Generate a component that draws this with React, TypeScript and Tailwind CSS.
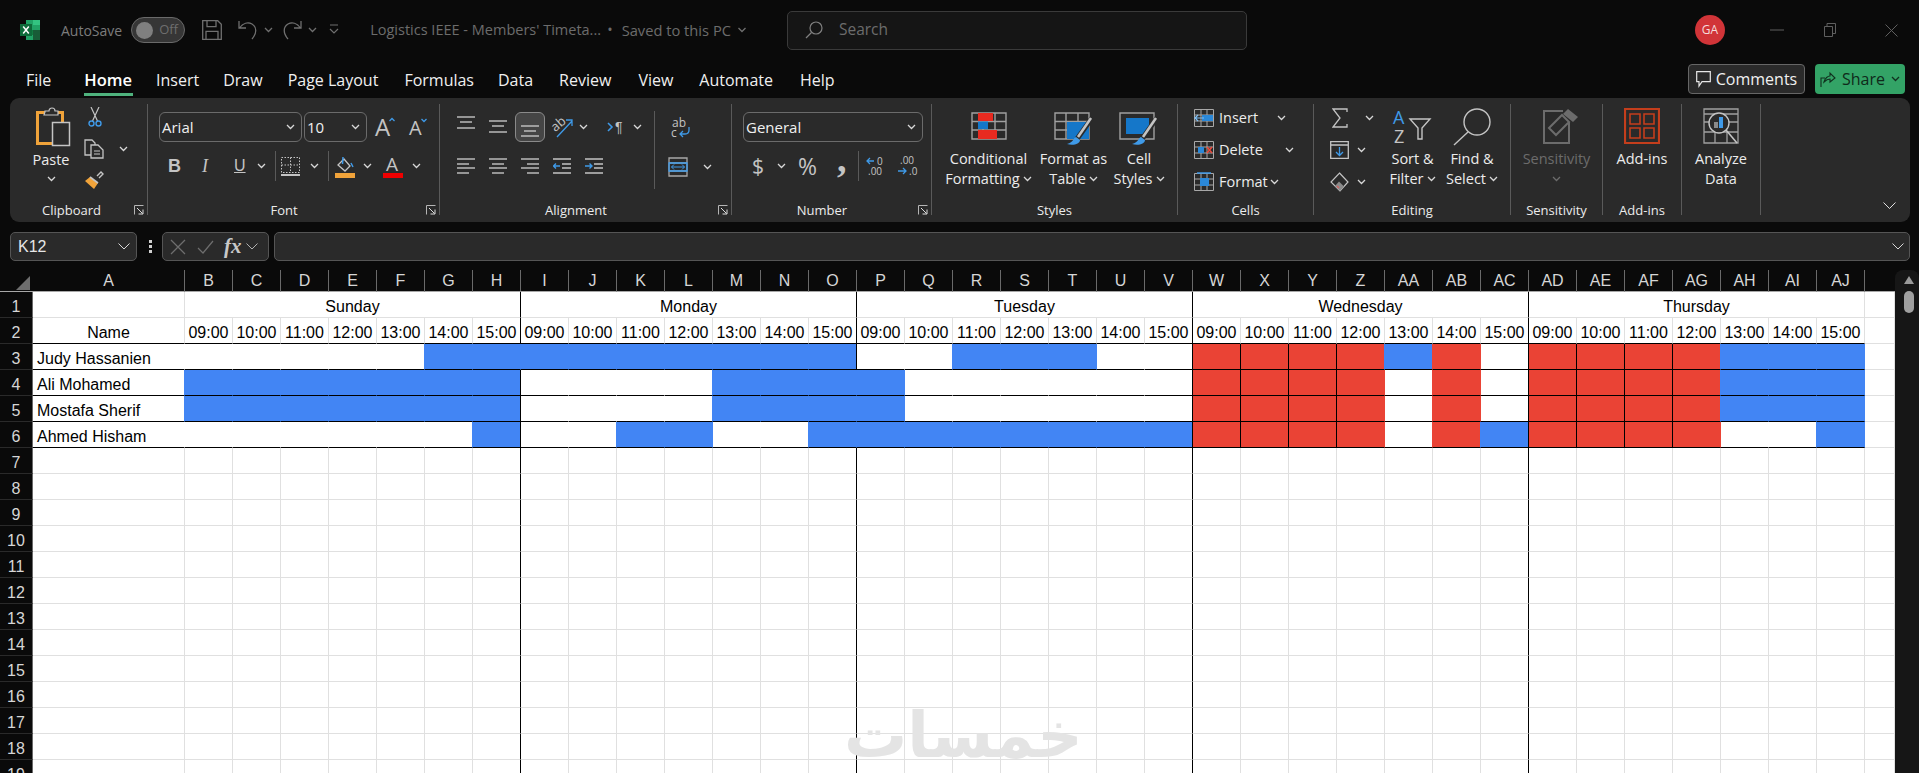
import type { ReactNode } from "react";

const gray = "#c4c4c4";
const blue = "#3f9ae8";
const orange = "#f0a33a";

const tabs = ["Insert", "Draw", "Page Layout", "Formulas", "Data", "Review", "View", "Automate", "Help"];
const tabGaps = ["ml-[24px]", "ml-[24px]", "ml-[25px]", "ml-[26px]", "ml-[24px]", "ml-[26px]", "ml-[27px]", "ml-[26px]", "ml-[27px]"];

const colNames = [
  "A", "B", "C", "D", "E", "F", "G", "H", "I", "J", "K", "L", "M", "N", "O", "P", "Q", "R", "S", "T",
  "U", "V", "W", "X", "Y", "Z", "AA", "AB", "AC", "AD", "AE", "AF", "AG", "AH", "AI", "AJ",
];
const days = ["Sunday", "Monday", "Tuesday", "Wednesday", "Thursday"];
const times = ["09:00", "10:00", "11:00", "12:00", "13:00", "14:00", "15:00"];
const people = [
  { name: "Judy Hassanien", first: "w", slots: "wwwwwbbbbbbbbbwwbbbwwrrrrbrwrrrrbbb" },
  { name: "Ali Mohamed", first: "b", slots: "bbbbbbbwwwwbbbbwwwwwwrrrrwrwrrrrbbb" },
  { name: "Mostafa Sherif", first: "b", slots: "bbbbbbbwwwwbbbbwwwwwwrrrrwrwrrrrbbb" },
  { name: "Ahmed Hisham", first: "w", slots: "wwwwwwbwwbbwwbbbbbbbbrrrrwrbrrrrwwb" },
];

const fillBg: Record<string, string> = { w: "bg-white", b: "bg-[#4285f4]", r: "bg-[#ea4335]" };
const rightLine: Record<string, string> = {
  k: "border-r-black",
  g: "border-r-[#e0e0e0]",
  w: "border-r-white",
  b: "border-r-[#4285f4]",
  r: "border-r-[#ea4335]",
};

function isDayEnd(i: number) {
  return i === 6 || i === 13 || i === 20 || i === 27;
}

function Chev({ color = "#d8d8d8", className = "" }: { color?: string; className?: string }) {
  return (
    <svg width="9" height="6" viewBox="0 0 9 6" fill="none" className={`shrink-0 ${className}`}>
      <path d="M1 1l3.5 3.5L8 1" stroke={color} strokeWidth="1.3" />
    </svg>
  );
}

function Launcher() {
  return (
    <svg width="10" height="10" viewBox="0 0 10 10" fill="none" className="shrink-0">
      <path d="M.5 9.5V.5h9" stroke="#b5b5b5" />
      <path d="M3 3l5.5 5.5M9 4.5V9H4.5" stroke="#dcdcdc" />
    </svg>
  );
}

function Group({ w, label, launcher, children, labelPad = "" }: { w: string; label?: string; launcher?: boolean; children: ReactNode; labelPad?: string }) {
  return (
    <div className={`flex h-[111px] shrink-0 flex-col border-r border-[#5a5a5a] ${w}`}>
      <div className="flex h-[99px] shrink-0 items-start">{children}</div>
      <div className={`flex h-[14px] shrink-0 items-center text-[13px] leading-[14px] text-[#ececec] ${labelPad}`}>
        <span className="flex-1 text-center">{label}</span>
        {launcher && (
          <span className="ml-[6px] mr-[3px]">
            <Launcher />
          </span>
        )}
      </div>
    </div>
  );
}

function Select({ w, text }: { w: string; text: string }) {
  return (
    <div className={`flex h-[30px] items-center justify-between rounded-[6px] border border-[#6b6b6b] pl-[2px] pr-[6px] text-[15px] leading-[20px] text-[#f0f0f0] ${w}`}>
      <span>{text}</span>
      <Chev />
    </div>
  );
}

function LargeBtn({ w, top, icon, lines, chev, dim }: { w: string; top: string; icon: ReactNode; lines: string[]; chev?: boolean; dim?: boolean }) {
  return (
    <div className={`flex flex-col items-center text-[14.5px] leading-[20px] ${dim ? "text-[#6c6c6c]" : "text-[#ececec]"} ${w}`}>
      <div className={`flex h-[45px] justify-center ${top}`}>{icon}</div>
      <span>{lines[0]}</span>
      <span className="flex h-[20px] items-center">
        {lines[1]}
        {chev && <Chev className={lines[1] ? "ml-[3px]" : ""} color={dim ? "#6c6c6c" : "#d8d8d8"} />}
      </span>
    </div>
  );
}

function Bars({ h = 26, lines }: { h?: number; lines: number[][] }) {
  return (
    <svg width="18" height={h} viewBox={`0 0 18 ${h}`} className="shrink-0">
      {lines.map((l) => (
        <path key={l.join()} d={`M${l[0]} ${l[2]}H${l[1]}`} stroke={gray} strokeWidth="1.4" />
      ))}
    </svg>
  );
}

function IndentIcon({ flip }: { flip?: boolean }) {
  return (
    <svg width="18" height="18" viewBox="0 0 18 18" fill="none" className="shrink-0">
      <path d="M0 2h18M0 16h18M9 7h9M9 11h9" stroke={gray} strokeWidth="1.4" />
      {flip ? (
        <path d="M0 9h7M4.5 6.5L7 9l-2.5 2.5" stroke={blue} strokeWidth="1.4" />
      ) : (
        <path d="M7 9H.5M3 6.5L.5 9 3 11.5" stroke={blue} strokeWidth="1.4" />
      )}
    </svg>
  );
}

function SmallGrid({ children }: { children?: ReactNode }) {
  return (
    <svg width="20" height="20" viewBox="0 0 20 20" fill="none" className="shrink-0">
      <path d="M.5 1.5h19v17H.5zM.5 7h19M.5 13h19M7 1.5v17M13 1.5v17" stroke="#a8a8a8" />
      {children}
    </svg>
  );
}

function Brush() {
  return (
    <>
      <path d="M38 6L23 27" stroke="#2a2a2a" strokeWidth="5" />
      <path d="M37 6L24 25" stroke={gray} strokeWidth="2.6" />
      <path d="M22 25c-3 1-2 5-9 7 6 2 13 0 13-4z" fill={blue} />
    </>
  );
}

function TableGrid() {
  return <path d="M1 1h34v26H1zM12 1v26M24 1v26M1 9.5h34M1 18h34" stroke="#a0a0a0" strokeWidth="1.4" />;
}

function Cut() {
  return (
    <svg width="14" height="20" viewBox="0 0 14 20" fill="none">
      <path d="M3 0l6.5 14M11 0L4.5 14" stroke={gray} strokeWidth="1.2" />
      <circle cx="3.5" cy="16.5" r="2.5" stroke={blue} strokeWidth="1.4" />
      <circle cx="10.5" cy="16.5" r="2.5" stroke={blue} strokeWidth="1.4" />
    </svg>
  );
}

function Copy() {
  return (
    <svg width="20" height="20" viewBox="0 0 20 20" fill="none">
      <path d="M1 1h7l3 3v12H1z" stroke={gray} strokeWidth="1.3" />
      <path d="M7 6h7l5 5v8H7z" fill="#2a2a2a" stroke={gray} strokeWidth="1.3" />
      <path d="M10 12h6M10 15h6" stroke={gray} />
    </svg>
  );
}

function Painter() {
  return (
    <svg width="20" height="19" viewBox="0 0 20 19" fill="none">
      <path d="M13 5l4-4 2 2-4 4" stroke={gray} strokeWidth="1.4" />
      <path d="M6 6l8 6-4 6L1 10z" fill={orange} />
      <path d="M6 6l8 6" stroke={gray} strokeWidth="1.6" />
    </svg>
  );
}

export default function App() {
  return (
    <div className="flex h-[773px] w-[1919px] flex-col overflow-hidden bg-[#0a0a0a] font-['Open_Sans',sans-serif]">
      {/* title bar */}
      <header className="flex h-[60px] shrink-0 items-center pl-[20px]">
        <svg width="20" height="20" viewBox="0 0 20 20" className="shrink-0">
          <path d="M6 0h14v20H6z" fill="#21a366" />
          <path d="M13 0h7v5h-7z" fill="#33c481" />
          <path d="M6 10h7v5H6z" fill="#107c41" />
          <path d="M13 10h7v10h-7z" fill="#185c37" />
          <path d="M0 4h12v12H0z" fill="#0e6b3a" />
          <path d="M3.2 6.5L8.8 13.5M8.8 6.5L3.2 13.5" stroke="#fff" strokeWidth="1.5" />
        </svg>
        <span className="ml-[21px] text-[14px] text-[#7c7c7c]">AutoSave</span>
        <div className="ml-[9px] flex h-[26px] w-[54px] items-center rounded-full border border-[#6a6a6a] bg-[#363636] pl-[4px]">
          <span className="h-[17px] w-[17px] rounded-full bg-[#7f7f7f]" />
          <span className="ml-[6px] text-[13px] text-[#6e6e6e]">Off</span>
        </div>
        <svg width="20" height="20" viewBox="0 0 20 20" fill="none" className="ml-[17px]">
          <path d="M.7.7h15l3.6 3.6v15H.7zM5 .7v6h9v-6M4 19.3v-8h12v8" stroke="#707070" strokeWidth="1.3" />
        </svg>
        <svg width="20" height="20" viewBox="0 0 20 20" fill="none" className="ml-[16px]">
          <path d="M1 1v7h7M1.5 8C5 3 10 2 14 4c5 3 5 9 0 15" stroke="#707070" strokeWidth="1.3" />
        </svg>
        <Chev color="#6f6f6f" className="ml-[6px]" />
        <svg width="20" height="20" viewBox="0 0 20 20" fill="none" className="ml-[9px]">
          <path d="M19 1v7h-7M18.5 8C15 3 10 2 6 4c-5 3-5 9 0 15" stroke="#707070" strokeWidth="1.3" />
        </svg>
        <Chev color="#6f6f6f" className="ml-[6px]" />
        <svg width="10" height="12" viewBox="0 0 10 12" fill="none" className="ml-[12px]">
          <path d="M1 1h8M1 5l4 4 4-4" stroke="#6f6f6f" strokeWidth="1.2" />
        </svg>
        <span className="ml-[31px] w-[229px] text-[14.5px] whitespace-nowrap text-[#6c6c6c]">Logistics IEEE - Members' Timeta...</span>
        <span className="ml-[8px] text-[14.5px] text-[#6c6c6c]">•</span>
        <span className="ml-[9px] text-[14.7px] whitespace-nowrap text-[#6c6c6c]">Saved to this PC</span>
        <Chev color="#6f6f6f" className="ml-[5px] w-[12px]" />
        <div className="ml-[39px] flex h-[39px] w-[460px] items-center rounded-[5px] border border-[#3a3a3a] bg-[#151515] pl-[17px] text-[15.5px] text-[#6c6c6c]">
          <svg width="18" height="18" viewBox="0 0 18 18" fill="none">
            <circle cx="11" cy="7" r="6" stroke="#808080" strokeWidth="1.2" />
            <path d="M6.5 11.5L1 17" stroke="#808080" strokeWidth="1.2" />
          </svg>
          <span className="ml-[16px]">Search</span>
        </div>
        <div className="ml-[448px] flex h-[30px] w-[30px] items-center justify-center rounded-full bg-[#d13438] text-[12px] text-[#f5dcdc]">GA</div>
        <svg width="14" height="2" viewBox="0 0 14 2" className="ml-[45px]">
          <path d="M0 1h14" stroke="#5f5f5f" />
        </svg>
        <svg width="12" height="14" viewBox="0 0 12 14" fill="none" className="ml-[40px]">
          <path d="M.5 3.5h8v10h-8zM3 3V.5h8.500v10H9" stroke="#5f5f5f" />
        </svg>
        <svg width="13" height="13" viewBox="0 0 13 13" fill="none" className="ml-[49px]">
          <path d="M.5.5l12 12M12.500.5l-12 12" stroke="#5f5f5f" />
        </svg>
      </header>

      {/* tabs */}
      <nav className="flex h-[38px] shrink-0 items-start pl-[26px] pt-[8px] text-[16px] leading-[24px] text-[#f0f0f0]">
        <span>File</span>
        <span className="relative ml-[33px] text-[16.5px] font-semibold text-white">
          Home
          <span className="absolute -bottom-[4px] left-0 h-[3px] w-[49px] bg-[#4fb27d]" />
        </span>
        {tabs.map((tab, i) => (
          <span key={tab} className={tabGaps[i]}>
            {tab}
          </span>
        ))}
        <div className="ml-auto mr-[14px] -mt-[4px] flex gap-[10px]">
          <div className="flex h-[30px] w-[117px] items-center justify-center gap-[5px] rounded-[4px] border border-[#666] bg-[#2a2a2a] text-[16px]">
            <svg width="15" height="17" viewBox="0 0 15 17" fill="none">
              <path d="M.7.7h13.600v10H6L3 15v-4.300H.7z" stroke="#e6e6e6" strokeWidth="1.2" />
            </svg>
            Comments
          </div>
          <div className="flex h-[30px] w-[90px] items-center justify-center gap-[6px] rounded-[4px] bg-[#33a366] text-[16px] text-[#0f2a1a]">
            <svg width="16" height="17" viewBox="0 0 16 17" fill="none">
              <path d="M1 16V7h4M4 11c1-4 4-6 6-6V2l5 5-5 4V8c-2 0-4 1-6 3z" stroke="#10301e" strokeWidth="1.1" />
            </svg>
            Share
            <Chev color="#10301e" />
          </div>
        </div>
      </nav>

      {/* ribbon */}
      <section className="mx-[10px] flex h-[124px] w-[1900px] shrink-0 rounded-[9px] bg-[#2a2a2a] pt-[6px]">
        <Group w="w-[138px]" label="Clipboard" launcher labelPad="pl-[5px]">
          <div className="ml-[19px] flex w-[44px] flex-col items-center pt-[3px]">
            <svg width="36" height="40" viewBox="0 0 36 40" fill="none" className="ml-[6px]">
              <path d="M1.500 5.500h25v31h-25z" stroke={orange} strokeWidth="3" />
              <path d="M9 5V4h4c0-4 6-4 6 0h3v4H8z" fill="#2a2a2a" stroke={gray} strokeWidth="1.200" />
              <path d="M16.500 15.500h17v23h-17z" fill="#2a2a2a" stroke={gray} strokeWidth="1.500" />
            </svg>
            <span className="mt-[3px] text-[14.5px] leading-[20px] text-[#ececec]">Paste</span>
            <Chev className="mt-[6px]" />
          </div>
          <div className="ml-[11px] flex flex-col gap-[12px] pt-[3px]">
            <div className="ml-[4px] h-[20px]">
              <Cut />
            </div>
            <div className="flex h-[20px] items-center">
              <Copy />
              <Chev className="ml-[15px]" />
            </div>
            <div className="h-[20px]">
              <Painter />
            </div>
          </div>
        </Group>

        <Group w="w-[292px]" label="Font" launcher>
          <div className="flex flex-col pl-[11px] pt-[8px]">
            <div className="flex items-center">
              <Select w="w-[143px]" text="Arial" />
              <div className="ml-[2px]">
                <Select w="w-[63px]" text="10" />
              </div>
              <svg width="20" height="20" viewBox="0 0 20 20" className="ml-[8px] overflow-visible">
                <text x="0" y="19" fontSize="24" fill={gray}>A</text>
                <path d="M14.500 4l2.500-2.500L19.500 4" fill="none" stroke={blue} strokeWidth="1.300" />
              </svg>
              <svg width="18" height="18" viewBox="0 0 18 18" className="ml-[14px] overflow-visible">
                <text x="0" y="17" fontSize="20" fill={gray}>A</text>
                <path d="M12.500 1l2.500 2.500L17.500 1" fill="none" stroke={blue} strokeWidth="1.300" />
              </svg>
            </div>
            <div className="mt-[12px] flex h-[24px] items-center leading-none text-[#c4c4c4]">
              <span className="ml-[9px] w-[14px] font-['Liberation_Sans',sans-serif] text-[18px] font-bold">B</span>
              <span className="ml-[20px] w-[10px] font-['Liberation_Serif',serif] text-[18px] italic">I</span>
              <span className="ml-[22px] w-[12px] font-['Liberation_Sans',sans-serif] text-[16px] underline">U</span>
              <Chev className="ml-[11px]" />
              <span className="ml-[9px] h-[30px] w-px bg-[#5a5a5a]" />
              <svg width="19" height="19" viewBox="0 0 19 19" fill="none" className="ml-[5px]">
                <path d="M.5.5h18v15H.5zM9.500.5v15M.5 8h18" stroke={gray} strokeDasharray="1.500 1.500" />
                <path d="M0 18h19" stroke={gray} strokeWidth="2" />
              </svg>
              <Chev className="ml-[10px]" />
              <span className="ml-[9px] h-[30px] w-px bg-[#5a5a5a]" />
              <svg width="20" height="22" viewBox="0 0 20 22" fill="none" className="ml-[6px] mt-[2px]">
                <path d="M3 9l6-6 6 7-5 5z" stroke={gray} strokeWidth="1.300" />
                <path d="M8 1l-.5 7M16 7l2 4" stroke={blue} strokeWidth="1.500" />
                <path d="M0 17h20v5H0z" fill={orange} />
              </svg>
              <Chev className="ml-[8px]" />
              <svg width="20" height="22" viewBox="0 0 20 22" className="ml-[11px] mt-[2px] overflow-visible">
                <text x="3" y="15" fontSize="19" fill={gray}>A</text>
                <path d="M0 17h20v5H0z" fill="#f00000" />
              </svg>
              <Chev className="ml-[9px]" />
            </div>
          </div>
        </Group>

        <Group w="w-[292px]" label="Alignment" launcher>
          <div className="mt-[7px] flex h-[78px] w-[215px] flex-col border-r border-[#5a5a5a] pl-[17px]">
            <div className="flex h-[32px] items-center">
              <Bars lines={[[0, 18, 3], [3, 15, 8], [0, 18, 14]]} />
              <span className="ml-[14px]">
                <Bars lines={[[0, 18, 7], [3, 15, 12], [0, 18, 18]]} />
              </span>
              <div className="ml-[8px] flex h-[30px] w-[30px] items-center justify-center rounded-[6px] border border-[#8a8a8a] bg-[#454545]">
                <Bars lines={[[0, 18, 12], [3, 15, 17], [0, 18, 22]]} />
              </div>
              <svg width="21" height="22" viewBox="0 0 21 22" className="ml-[7px] overflow-visible">
                <text x="0" y="13" fontSize="13" fill={gray} transform="rotate(-40 6 10)">ab</text>
                <path d="M5 21L20 5M14 4h6v6" fill="none" stroke={blue} strokeWidth="1.300" />
              </svg>
              <Chev className="ml-[6px]" />
              <span className="ml-[19px] flex w-[19px] items-center">
                <svg width="7" height="10" viewBox="0 0 7 10" fill="none">
                  <path d="M1 1l4 4-4 4" stroke={blue} strokeWidth="1.600" />
                </svg>
                <span className="ml-[1px] font-['Liberation_Sans',sans-serif] text-[14px] leading-[14px] text-[#c4c4c4]">¶</span>
              </span>
              <Chev className="ml-[7px]" />
            </div>
            <div className="mt-[11px] flex h-[24px] items-center gap-[14px]">
              <Bars h={18} lines={[[0, 18, 2], [0, 12, 7], [0, 18, 11], [0, 12, 16]]} />
              <Bars h={18} lines={[[0, 18, 2], [3, 15, 7], [0, 18, 11], [3, 15, 16]]} />
              <Bars h={18} lines={[[0, 18, 2], [6, 18, 7], [0, 18, 11], [6, 18, 16]]} />
              <IndentIcon />
              <IndentIcon flip />
            </div>
          </div>
          <div className="flex flex-col pl-[16px] pt-[14px]">
            <svg width="19" height="20" viewBox="0 0 19 20" className="overflow-visible">
              <text x="1" y="9" fontSize="12" fill={gray}>ab</text>
              <text x="0" y="19" fontSize="12" fill={gray}>c</text>
              <path d="M18 9v3c0 3-2 4-4 4H9M12 13l-3 3 3 3" fill="none" stroke={blue} strokeWidth="1.300" />
            </svg>
            <div className="-ml-[3px] mt-[19px] flex items-center">
              <svg width="20" height="20" viewBox="0 0 20 20" fill="none">
                <path d="M1 1h18v18H1zM1 6h18M1 14h18" stroke="#a8a8a8" strokeWidth="1.300" />
                <path d="M1 6h18v8H1z" stroke={blue} strokeWidth="1.300" />
                <path d="M3.500 10h13M6 7.500L3.500 10 6 12.500M14 7.500l2.500 2.500-2.500 2.500" stroke={blue} />
              </svg>
              <Chev className="ml-[15px]" />
            </div>
          </div>
        </Group>

        <Group w="w-[200px]" label="Number" launcher>
          <div className="flex flex-col pl-[11px] pt-[8px]">
            <Select w="w-[180px]" text="General" />
            <div className="mt-[12px] flex h-[24px] items-center text-[#c4c4c4]">
              <span className="ml-[9px] w-[13px] text-[21px] leading-[24px]">$</span>
              <Chev className="ml-[12px]" />
              <span className="ml-[12px] w-[24px] text-[23px] leading-[24px]">%</span>
              <span className="ml-[15px] w-[12px] -translate-y-[7px] font-['Liberation_Serif',serif] text-[38px] font-bold leading-[24px]">,</span>
              <span className="ml-[9px] h-[30px] w-px bg-[#5a5a5a]" />
              <svg width="20" height="22" viewBox="0 0 20 22" className="ml-[7px] overflow-visible">
                <path d="M8 6H1M4 3L1 6l3 3" fill="none" stroke={blue} strokeWidth="1.300" />
                <text x="11" y="10" fontSize="10" fill={gray}>0</text>
                <text x="2" y="20" fontSize="10" fill={gray}>.00</text>
              </svg>
              <svg width="20" height="22" viewBox="0 0 20 22" className="ml-[12px] overflow-visible">
                <text x="2" y="9" fontSize="10" fill={gray}>.00</text>
                <path d="M0 16h8M5 13l3 3-3 3" fill="none" stroke={blue} strokeWidth="1.300" />
                <text x="11" y="20" fontSize="10" fill={gray}>.0</text>
              </svg>
            </div>
          </div>
        </Group>

        <Group w="w-[246px]" label="Styles">
          <div className="flex pl-[9px]">
            <LargeBtn
              w="w-[95px]"
              top="pt-[8px]"
              chev
              lines={["Conditional", "Formatting"]}
              icon={
                <svg width="36" height="28" viewBox="0 0 36 28" fill="none">
                  <TableGrid />
                  <path d="M7 1h15v8H7zM7 18h19v9H7z" fill="#e82a20" />
                  <path d="M7 9.500h10V17H7z" fill="#1577c9" />
                </svg>
              }
            />
            <LargeBtn
              w="w-[75px]"
              top="pt-[8px]"
              chev
              lines={["Format as", "Table"]}
              icon={
                <svg width="40" height="34" viewBox="0 0 40 34" fill="none">
                  <TableGrid />
                  <path d="M13 10h22v17H13z" fill="#1577c9" />
                  <Brush />
                </svg>
              }
            />
            <LargeBtn
              w="w-[56px]"
              top="pt-[8px]"
              chev
              lines={["Cell", "Styles"]}
              icon={
                <svg width="40" height="34" viewBox="0 0 40 34" fill="none">
                  <path d="M1 1h34v26H1z" stroke="#a0a0a0" strokeWidth="1.400" />
                  <path d="M7 6h23v16H7z" fill="#1577c9" />
                  <Brush />
                </svg>
              }
            />
          </div>
        </Group>

        <Group w="w-[136px]" label="Cells">
          <div className="flex flex-col gap-[4px] pl-[16px] text-[14.5px] text-[#ececec]">
            <div className="flex h-[28px] items-center">
              <SmallGrid>
                <path d="M8 7h11v6H8z" fill="#2b88d8" />
                <path d="M10 10H1M4 7l-3 3 3 3" stroke="#7fc0f5" strokeWidth="1.200" />
              </SmallGrid>
              <span className="ml-[5px] w-[58px]">Insert</span>
              <Chev />
            </div>
            <div className="flex h-[28px] items-center">
              <SmallGrid>
                <path d="M4 7h6v6H4z" fill="#2b88d8" />
                <path d="M13 7l5 6M18 7l-5 6" stroke="#ef4a3c" strokeWidth="1.500" />
              </SmallGrid>
              <span className="ml-[5px] w-[66px]">Delete</span>
              <Chev />
            </div>
            <div className="flex h-[28px] items-center">
              <SmallGrid>
                <path d="M6 6h9v8H6z" fill="#2b88d8" />
                <path d="M3 1h14" stroke={blue} strokeWidth="1.500" />
              </SmallGrid>
              <span className="ml-[5px] w-[51px]">Format</span>
              <Chev />
            </div>
          </div>
        </Group>

        <Group w="w-[197px]" label="Editing">
          <div className="flex">
            <div className="flex w-[66px] flex-col gap-[4px] pl-[16px]">
              <div className="flex h-[28px] items-center">
                <svg width="16" height="20" viewBox="0 0 16 20" fill="none" className="ml-[2px]">
                  <path d="M15 4V1H1l7 9-7 9h14v-3" stroke={gray} strokeWidth="1.300" />
                </svg>
                <Chev className="ml-[17px]" />
              </div>
              <div className="flex h-[28px] items-center">
                <svg width="19" height="18" viewBox="0 0 19 18" fill="none">
                  <path d="M.7.7h17.600v16.600H.7zM.7 4h17.600" stroke={gray} strokeWidth="1.300" />
                  <path d="M9.500 6v8M6 11l3.500 3.500L13 11" stroke={blue} strokeWidth="1.300" />
                </svg>
                <Chev className="ml-[8px]" />
              </div>
              <div className="flex h-[28px] items-center">
                <svg width="19" height="20" viewBox="0 0 19 20" fill="none">
                  <path d="M9.500 1L18 10l-8 9-9-9z" stroke={gray} strokeWidth="1.200" />
                  <path d="M5 14l5 5 4-4.500-5-5z" fill="#8a8a8a" />
                  <path d="M7 14l2 2" stroke="#d06060" strokeWidth="1.500" />
                </svg>
                <Chev className="ml-[8px]" />
              </div>
            </div>
            <LargeBtn
              w="w-[65px]"
              top="pt-[4px]"
              chev
              lines={["Sort &", "Filter"]}
              icon={
                <svg width="40" height="38" viewBox="0 0 40 38" fill="none" className="overflow-visible">
                  <text x="0" y="16" fontSize="18" fill={blue}>A</text>
                  <text x="1" y="35" fontSize="18" fill={gray}>Z</text>
                  <path d="M17 11h20l-8 9v11h-4V20z" stroke={gray} strokeWidth="1.400" />
                </svg>
              }
            />
            <LargeBtn
              w="w-[54px]"
              top="pt-[4px]"
              chev
              lines={["Find &", "Select"]}
              icon={
                <svg width="38" height="38" viewBox="0 0 38 38" fill="none">
                  <circle cx="24" cy="14" r="13" stroke={gray} strokeWidth="1.400" />
                  <path d="M15 24L1 37" stroke={gray} strokeWidth="1.400" />
                </svg>
              }
            />
          </div>
        </Group>

        <Group w="w-[92px]" label="Sensitivity">
          <LargeBtn
            w="w-full"
            top="pt-[4px]"
            dim
            chev
            lines={["Sensitivity", ""]}
            icon={
              <svg width="36" height="36" viewBox="0 0 36 36" fill="none" className="ml-[8px]">
                <path d="M20 3H1v32h25V14" stroke="#6c6c6c" strokeWidth="2" />
                <path d="M6 20l13-13 7 7-13 13z" stroke="#6c6c6c" strokeWidth="2" />
                <path d="M20 6l5-5 10 8-5 5z" fill="#6c6c6c" />
              </svg>
            }
          />
        </Group>

        <Group w="w-[79px]" label="Add-ins">
          <LargeBtn
            w="w-full"
            top="pt-[4px]"
            lines={["Add-ins", ""]}
            icon={
              <svg width="36" height="36" viewBox="0 0 36 36" fill="none">
                <path d="M1 1h34v34H1z" stroke="#c43e1c" strokeWidth="2.200" />
                <path d="M6 6h10v10H6zM20 6h10v10H20zM6 20h10v10H6zM20 20h10v10H20z" stroke="#c43e1c" strokeWidth="1.600" />
              </svg>
            }
          />
        </Group>

        <Group w="w-[79px]">
          <LargeBtn
            w="w-full"
            top="pt-[4px]"
            lines={["Analyze", "Data"]}
            icon={
              <svg width="36" height="36" viewBox="0 0 36 36" fill="none">
                <path d="M1 1h34v34H1zM1 6h34M1 14h34M1 24h34M12 24v11M24 24v11" stroke="#a0a0a0" strokeWidth="1.300" />
                <circle cx="16" cy="15" r="10" fill="#2a2a2a" stroke={gray} strokeWidth="1.400" />
                <path d="M11 14h4v6h-4z" fill="#8a8a8a" />
                <path d="M16 9h4v11h-4z" fill={blue} />
                <path d="M23 22l11 13" stroke={gray} strokeWidth="1.600" />
              </svg>
            }
          />
        </Group>

        <div className="flex h-[111px] flex-1 items-end justify-end pb-[6px] pr-[14px]">
          <svg width="13" height="7" viewBox="0 0 13 7" fill="none">
            <path d="M.5.5l6 6 6-6" stroke="#e0e0e0" />
          </svg>
        </div>
      </section>

      {/* formula bar */}
      <div className="mt-[10px] flex h-[29px] shrink-0 items-stretch pl-[10px] font-['Liberation_Sans',sans-serif]">
        <div className="flex w-[127px] items-center justify-between rounded-[5px] border border-[#555] bg-[#2a2a2a] pl-[7px] pr-[6px] text-[16px] text-[#e6e6e6]">
          K12
          <svg width="12" height="7" viewBox="0 0 12 7" fill="none">
            <path d="M.5.5L6 6 11.500.5" stroke="#d8d8d8" />
          </svg>
        </div>
        <div className="ml-[11px] flex w-[4px] flex-col items-center justify-center gap-[2px]">
          <span className="h-[3px] w-[3px] bg-[#d0d0d0]" />
          <span className="h-[3px] w-[3px] bg-[#d0d0d0]" />
          <span className="h-[3px] w-[3px] bg-[#d0d0d0]" />
        </div>
        <div className="ml-[10px] flex w-[107px] items-center rounded-[5px] border border-[#555] bg-[#2a2a2a] pl-[7px]">
          <svg width="16" height="16" viewBox="0 0 16 16" fill="none">
            <path d="M1 1l14 14M15 1L1 15" stroke="#6e6e6e" strokeWidth="1.300" />
          </svg>
          <svg width="17" height="14" viewBox="0 0 17 14" fill="none" className="ml-[11px]">
            <path d="M1 8l5 5L16 1" stroke="#6e6e6e" strokeWidth="1.200" />
          </svg>
          <span className="ml-[10px] font-['Liberation_Serif',serif] text-[21px] font-bold italic leading-none text-[#c8c8c8]">fx</span>
          <svg width="12" height="7" viewBox="0 0 12 7" fill="none" className="ml-[4px]">
            <path d="M.5.5L6 6 11.500.5" stroke="#b0b0b0" />
          </svg>
        </div>
        <div className="ml-[5px] flex w-[1636px] items-center justify-end rounded-[5px] border border-[#555] bg-[#2a2a2a] pr-[5px]">
          <svg width="12" height="7" viewBox="0 0 12 7" fill="none">
            <path d="M.5.5L6 6 11.500.5" stroke="#d8d8d8" />
          </svg>
        </div>
      </div>

      {/* sheet */}
      <div className="mt-[9px] flex min-h-0 flex-1 font-['Liberation_Sans',sans-serif] text-[16px]">
        <div className="relative w-[1895px] shrink-0 overflow-hidden">
          <div className="grid grid-cols-[33px_152px_repeat(35,48px)_30px] grid-rows-[22px] auto-rows-[26px]">
            <div className="flex items-end justify-end border-b border-[#a8a8a8] pb-[1px] pr-[3px]">
              <svg width="14" height="14" viewBox="0 0 14 14">
                <path d="M14 0v14H0z" fill="#6e6e6e" />
              </svg>
            </div>
            {colNames.map((name) => (
              <div key={name} className="flex items-center justify-center border-b border-r border-b-[#a8a8a8] border-r-[#6a6a6a] text-[#d6d6d6]">
                {name}
              </div>
            ))}
            <div className="border-b border-[#a8a8a8]" />

            {/* row 1 */}
            <RowHead n={1} />
            <div className="border-b border-r border-[#e0e0e0] bg-white" />
            {days.map((day, i) => (
              <div
                key={day}
                className={`col-span-7 flex items-end justify-center border-b border-r border-b-[#e0e0e0] bg-white leading-[20px] text-black ${i < 4 ? "border-r-black" : "border-r-[#e0e0e0]"}`}
              >
                {day}
              </div>
            ))}
            <div className="border-b border-r border-[#e0e0e0] bg-white" />

            {/* row 2 */}
            <RowHead n={2} />
            <div className="flex items-end justify-center border-b border-r border-b-black border-r-[#e0e0e0] bg-white leading-[20px] text-black">Name</div>
            {days.map((day) =>
              times.map((t, i) => (
                <div
                  key={day + t}
                  className={`flex items-end justify-center border-b border-r border-b-black bg-white leading-[20px] text-black ${i === 6 && day !== "Thursday" ? "border-r-black" : "border-r-[#e0e0e0]"}`}
                >
                  {t}
                </div>
              )),
            )}
            <div className="border-b border-r border-[#e0e0e0] bg-white" />

            {/* people */}
            {people.map((p, r) => (
              <PersonRow key={p.name} n={r + 3} name={p.name} first={p.first} slots={p.slots} />
            ))}

            {/* empty rows */}
            {Array.from({ length: 13 }, (_, r) => (
              <EmptyRow key={r} n={r + 7} />
            ))}
          </div>

          <div dir="rtl" className="pointer-events-none absolute left-[844px] top-[431px] font-['DejaVu_Sans',sans-serif] text-[63px] font-bold leading-[70px] text-[#e4e4e4]">
            خمسات
          </div>
        </div>

        {/* scrollbar */}
        <div className="flex w-[24px] flex-col items-center rounded-t-[8px] bg-[#161616] pl-[3px] pt-[6px]">
          <svg width="10" height="8" viewBox="0 0 10 8">
            <path d="M5 0l5 8H0z" fill="#9a9a9a" />
          </svg>
          <span className="mt-[7px] h-[22px] w-[10px] rounded-full bg-[#a0a0a0]" />
        </div>
      </div>
    </div>
  );
}

function RowHead({ n }: { n: number }) {
  return <div className="flex items-end justify-center border-b border-r border-b-[#2a2a2a] border-r-[#6a6a6a] leading-[20px] text-[#d6d6d6]">{n}</div>;
}

function PersonRow({ n, name, first, slots }: { n: number; name: string; first: string; slots: string }) {
  const cells = slots.split("");
  return (
    <>
      <RowHead n={n} />
      <div className={`flex items-end border-b border-r border-b-black bg-white pl-[4px] leading-[20px] whitespace-nowrap text-black ${rightLine[first]}`}>{name}</div>
      {cells.map((c, i) => {
        const next = cells[i + 1];
        let line = c;
        if (isDayEnd(i)) line = c === "b" && next === "b" ? "b" : "k";
        else if (c === "r" && next === "r") line = "k";
        else if (next && next !== "w") line = next;
        return <div key={i} className={`border-b border-r border-b-black ${fillBg[c]} ${rightLine[line]}`} />;
      })}
      <div className="border-b border-r border-[#e0e0e0] bg-white" />
    </>
  );
}

function EmptyRow({ n }: { n: number }) {
  return (
    <>
      <RowHead n={n} />
      <div className="border-b border-r border-[#e0e0e0] bg-white" />
      {Array.from({ length: 35 }, (_, i) => (
        <div key={i} className={`border-b border-r border-b-[#e0e0e0] bg-white ${isDayEnd(i) ? "border-r-black" : "border-r-[#e0e0e0]"}`} />
      ))}
      <div className="border-b border-r border-[#e0e0e0] bg-white" />
    </>
  );
}
